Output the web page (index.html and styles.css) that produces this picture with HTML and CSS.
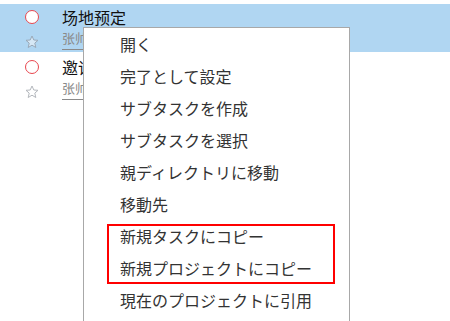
FILE: index.html
```html
<!DOCTYPE html>
<html lang="zh">
<head>
    <meta charset="UTF-8">
    <meta name="viewport" content="width=device-width, initial-scale=1.0">
    <title>Task List</title>
    <link rel="stylesheet" href="styles.css">
</head>
<body>
    <div class="task-list">
        <div class="task-row selected">
            <div class="task-icons">
                <span class="check-circle"></span>
                <svg class="star" width="14" height="14" viewBox="0 0 14 14">
                    <polygon points="7,1 8.8,5 13,5.3 9.8,8.1 10.8,12.5 7,10.2 3.2,12.5 4.2,8.1 1,5.3 5.2,5" />
                </svg>
            </div>
            <div class="task-text">
                <div class="task-title">场地预定</div>
                <div class="task-owner">张帅老师</div>
            </div>
        </div>
        <div class="task-row">
            <div class="task-icons">
                <span class="check-circle"></span>
                <svg class="star" width="14" height="14" viewBox="0 0 14 14">
                    <polygon points="7,1 8.8,5 13,5.3 9.8,8.1 10.8,12.5 7,10.2 3.2,12.5 4.2,8.1 1,5.3 5.2,5" />
                </svg>
            </div>
            <div class="task-text">
                <div class="task-title">邀请嘉宾</div>
                <div class="task-owner">张帅老师</div>
            </div>
        </div>
    </div>

    <!-- context menu opened on the first task -->
    <ul class="context-menu">
        <li>開く</li>
        <li>完了として設定</li>
        <li>サブタスクを作成</li>
        <li>サブタスクを選択</li>
        <li>親ディレクトリに移動</li>
        <li>移動先</li>
        <li>新規タスクにコピー</li>
        <li>新規プロジェクトにコピー</li>
        <li>現在のプロジェクトに引用</li>
    </ul>
    <div class="mark-box"></div>
</body>
</html>
```

FILE: styles.css
```css
body { margin: 0; font-family: "Noto Sans CJK JP", "Noto Sans CJK SC", sans-serif; background-color: #ffffff; overflow: hidden; }
.task-list { padding-top: 4px; }
.task-row { display: flex; gap: 18px; padding: 2px 0 2px 20px; margin-bottom: 2px; height: 44px; }
.task-row.selected { background-color: #b0d6f2; }
.task-icons { width: 24px; display: flex; flex-direction: column; align-items: center; }
.check-circle { display: block; box-sizing: border-box; width: 14px; height: 14px; margin: 4px 0; border: 1.5px solid #e8464e; border-radius: 50%; background-color: #ffffff; }
.star { margin-top: 7px; fill: #ffffff; stroke: #b4b8bd; stroke-width: 1; }
.task-row.selected .star { fill: #d6e8f6; stroke: #9aa9b8; }
.task-text { display: flex; flex-direction: column; }
.task-title { height: 22px; line-height: 22px; font-size: 16px; color: #111111; }
.task-owner { height: 22px; line-height: 20px; font-size: 13px; color: #8a8a8a; border-bottom: 1px solid #8a8a8a; box-sizing: border-box; align-self: flex-start; }
.context-menu { position: absolute; left: 83px; top: 27px; width: 265px; margin: 0; padding: 0 0 16px; list-style: none; background-color: #ffffff; border: 1px solid #a8a8a8; }
.context-menu li { height: 32px; line-height: 32px; padding-left: 36px; font-size: 16px; color: #333333; }
.mark-box { position: absolute; left: 107px; top: 224px; width: 224px; height: 56px; border: 2px solid #ff0000; }
```
